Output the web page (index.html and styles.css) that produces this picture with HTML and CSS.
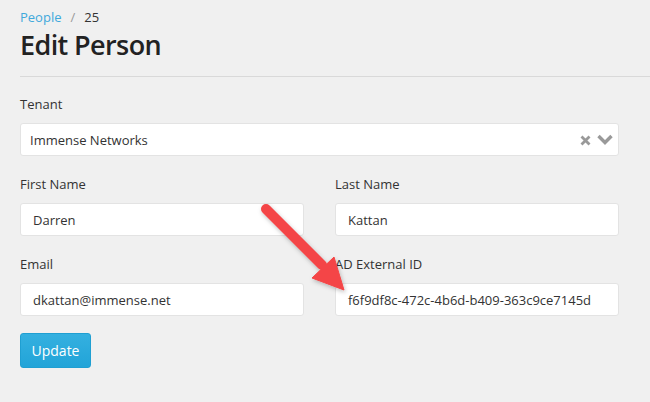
FILE: index.html
```html
<!DOCTYPE html>
<html>
<head>
<meta charset="utf-8">
<link rel="stylesheet" href="styles.css">
</head>
<body>
<div class="page">
  <div class="breadcrumb"><a class="crumb-link">People</a><span class="sep">/</span><span>25</span></div>
  <h1 class="title">Edit Person</h1>
  <hr class="rule">
  <form class="form">
    <div class="group">
      <label class="label">Tenant</label>
      <div class="select">
        <span class="select-value">Immense Networks</span>
        <span class="select-icons">
          <svg class="clear" width="11" height="11" viewBox="0 0 11 11"><path d="M1.5 1.5 L9.5 9.5 M9.5 1.5 L1.5 9.5" stroke="#999" stroke-width="2.8" stroke-linecap="butt"/></svg>
          <svg class="chev" width="16" height="11" viewBox="0 0 16 11"><path d="M1.5 2 L8 8.5 L14.5 2" fill="none" stroke="#999" stroke-width="3.4"/></svg>
        </span>
      </div>
    </div>
    <div class="row">
      <div class="group">
        <label class="label">First Name</label>
        <div class="input">Darren</div>
      </div>
      <div class="group">
        <label class="label">Last Name</label>
        <div class="input">Kattan</div>
      </div>
    </div>
    <div class="row">
      <div class="group">
        <label class="label">Email</label>
        <div class="input">dkattan@immense.net</div>
      </div>
      <div class="group">
        <label class="label">AD External ID</label>
        <div class="input">f6f9df8c-472c-4b6d-b409-363c9ce7145d</div>
      </div>
    </div>
    <button type="button" class="btn">Update</button>
  </form>
  <svg class="arrow" width="650" height="402" viewBox="0 0 650 402">
    <defs>
      <filter id="sh" x="-20%" y="-20%" width="140%" height="140%">
        <feDropShadow dx="1" dy="2" stdDeviation="2" flood-color="#000" flood-opacity="0.25"/>
      </filter>
    </defs>
    <g filter="url(#sh)" fill="#f44546" stroke="#f44546">
      <line x1="266" y1="209" x2="322" y2="265" stroke-width="10" stroke-linecap="round"/>
      <polygon points="312,278 334,257 344,290" stroke-width="1" stroke-linejoin="round"/>
    </g>
  </svg>
</div>
</body>
</html>
```
FILE: styles.css
```css
html, body {
  margin: 0;
  padding: 0;
  background: #f0f0f0;
}
body {
  font-family: "Segoe UI", "Open Sans", "Noto Sans", sans-serif;
  color: #333;
  font-size: 13px;
}
.page {
  position: relative;
  width: 650px;
  height: 402px;
  overflow: hidden;
  padding-top: 8px;
  box-sizing: border-box;
}
.breadcrumb {
  padding-left: 20px;
  line-height: 18px;
  font-size: 13px;
  color: #333;
}
.crumb-link {
  color: #3fa9dc;
}
.sep {
  color: #999;
  margin: 0 9px;
}
.title {
  margin: 2px 0 0 20px;
  font-size: 27px;
  line-height: 34px;
  font-weight: 600;
  letter-spacing: -0.6px;
  color: #222;
}
.rule {
  margin: 14px 0 16px 20px;
  border: 0;
  border-top: 1px solid #d9d9d9;
  height: 0;
}
.form {
  width: 599px;
  margin-left: 20px;
}
.row {
  display: grid;
  grid-template-columns: 284px 284px;
  column-gap: 31px;
}
.group {
  margin-bottom: 17px;
}
.label {
  display: block;
  line-height: 22px;
  margin-bottom: 8px;
  color: #333;
}
.select, .input {
  box-sizing: border-box;
  height: 33px;
  background: #fff;
  border: 1px solid #e3e3e3;
  border-radius: 3px;
  display: flex;
  align-items: center;
  color: #333;
}
.select {
  padding: 0 5px 0 9px;
  justify-content: space-between;
}
.input {
  padding-left: 12px;
}
.select-icons {
  display: flex;
  align-items: center;
  gap: 6px;
}
.clear { margin-top: 2px; }
.btn {
  display: block;
  width: 71px;
  height: 35px;
  border: 1px solid #1f9fd2;
  border-radius: 3px;
  background: linear-gradient(#34b0e0, #22a4d8);
  color: #fff;
  font-family: inherit;
  font-size: 14px;
  padding: 0;
}
.arrow {
  position: absolute;
  left: 0;
  top: 0;
  pointer-events: none;
}
```
